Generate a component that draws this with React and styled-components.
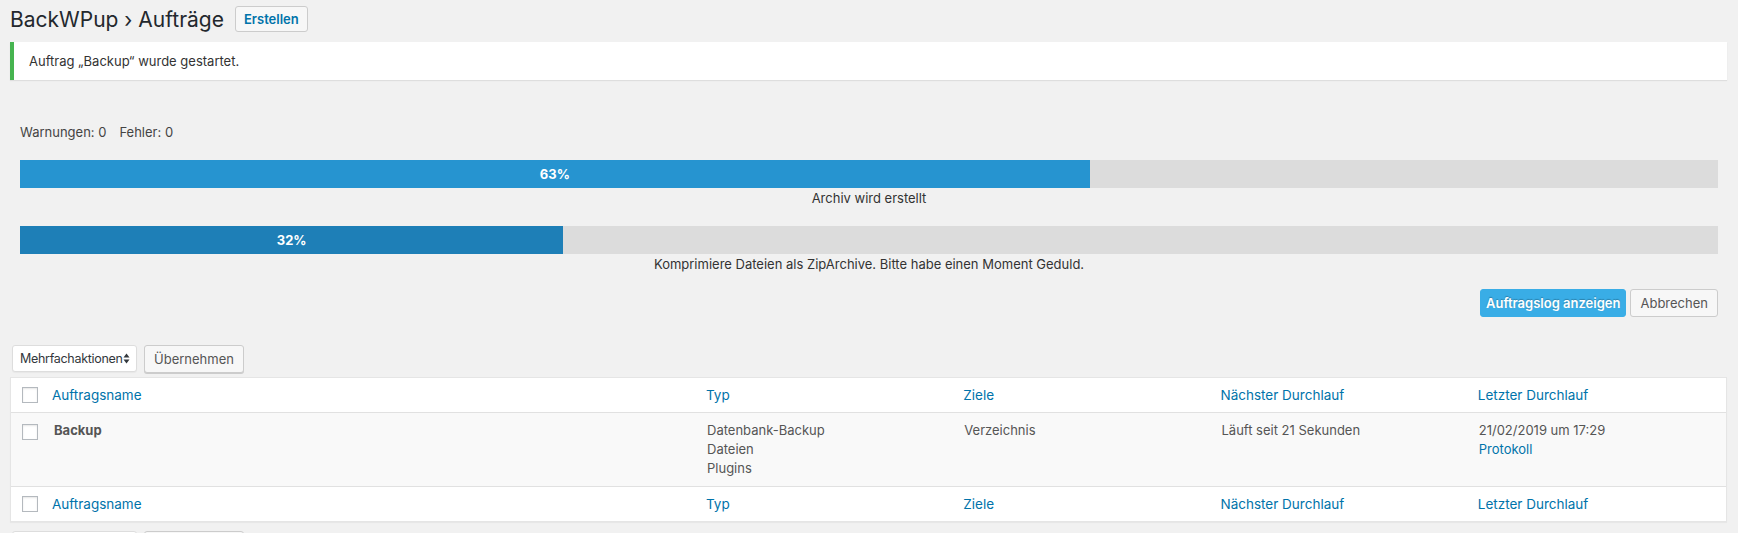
import React from "react";
import styled, { createGlobalStyle } from "styled-components";

const GlobalStyle = createGlobalStyle`
  body {
    margin: 0;
    background: #f1f1f1;
    font-family: Inter, "Liberation Sans", sans-serif;
    font-size: 13px;
    color: #444;
  }
`;

const Wrap = styled.div`
  padding: 0 11px 0 10px;
`;

const TitleRow = styled.div`
  display: flex;
  align-items: center;
  height: 38px;
`;

const Title = styled.h1`
  margin: 0 11px 0 0;
  font-size: 21px;
  font-weight: 400;
  line-height: 29px;
  color: #23282d;
`;

const Button = styled.button`
  box-sizing: border-box;
  height: ${(p) => (p.$small ? "26px" : "28px")};
  padding: 0 ${(p) => (p.$small ? "8px" : p.$primary ? "5px" : "9px")};
  font-family: inherit;
  font-size: 13px;
  font-weight: ${(p) => (p.$primary || p.$link ? 600 : 400)};
  border-radius: 3px;
  border: 1px solid ${(p) => (p.$primary ? "#39ade6" : "#ccc")};
  background: ${(p) => (p.$primary ? "#39ade6" : "#f7f7f7")};
  color: ${(p) => (p.$primary ? "#fff" : p.$link ? "#0073aa" : "#555")};
  text-shadow: ${(p) => (p.$primary ? "0 -1px 1px rgba(0,0,0,0.25)" : "none")};
  box-shadow: ${(p) => (p.$raised ? "0 1px 0 #ccc" : "none")};
  cursor: pointer;
`;

const Notice = styled.div`
  margin-top: 4px;
  height: 38px;
  display: flex;
  align-items: center;
  background: #fff;
  border-left: 4px solid #46b450;
  box-shadow: 0 1px 1px rgba(0, 0, 0, 0.08);
  padding-left: 15px;
  color: #333;
`;

const Progress = styled.section`
  padding: 0 9px 0 10px;
`;

const Counters = styled.div`
  margin-top: 42px;
  display: flex;
  gap: 13px;
  line-height: 20px;
  color: #444;
`;

const Track = styled.div`
  margin-top: 18px;
  height: 28px;
  background: #dcdcdc;
  display: flex;
`;

const Fill = styled.div`
  background: ${(p) => p.$color};
  color: #fff;
  font-weight: 700;
  text-align: center;
  line-height: 28px;
`;

const StepText = styled.div`
  text-align: center;
  line-height: 20px;
  color: #333;
`;

const Actions = styled.div`
  margin-top: 15px;
  display: flex;
  justify-content: flex-end;
  gap: 4px;
`;

const TableNav = styled.div`
  margin-top: ${(p) => p.$top};
  display: flex;
  gap: 7px;
  align-items: flex-start;
  padding-left: 2px;
`;

const Select = styled.div`
  box-sizing: border-box;
  width: 125px;
  height: 27px;
  background: #fff;
  border: 1px solid #ddd;
  border-radius: 3px;
  box-shadow: 0 1px 1px rgba(0, 0, 0, 0.04);
  display: flex;
  align-items: center;
  justify-content: space-between;
  padding: 0 6px 0 7px;
  color: #32373c;
  font-size: 12.5px;
  letter-spacing: -0.3px;
  white-space: nowrap;
`;

const Table = styled.table`
  margin-top: 4px;
  width: 100%;
  table-layout: fixed;
  border-collapse: separate;
  border-spacing: 0;
  background: #fff;
  border: 1px solid #e5e5e5;
  box-shadow: 0 1px 1px rgba(0, 0, 0, 0.04);
`;

const HeadCell = styled.th`
  text-align: left;
  font-weight: 400;
  font-size: 13.5px;
  padding: ${(p) => (p.$check ? "9px 0 0 11px" : "8px 8px 8px 9px")};
  line-height: 18px;
  vertical-align: top;
  color: #0073aa;
  border-bottom: ${(p) => (p.$foot ? "none" : "1px solid #e1e1e1")};
  border-top: ${(p) => (p.$foot ? "1px solid #e1e1e1" : "none")};
`;

const Cell = styled.td`
  background: #f9f9f9;
  vertical-align: top;
  padding: ${(p) => (p.$check ? "11px 0 0 11px" : "8px 8px 8px " + (p.$name ? "11px" : "10px"))};
  line-height: 19px;
  color: #555;
  font-weight: ${(p) => (p.$name ? 700 : 400)};
`;

const Line = styled.div`
  color: ${(p) => (p.$link ? "#0073aa" : "inherit")};
`;

const Check = styled.span`
  display: block;
  box-sizing: border-box;
  width: 16px;
  height: 16px;
  border: 1px solid #b4b9be;
  background: #fff;
  box-shadow: inset 0 1px 2px rgba(0, 0, 0, 0.1);
`;

function SortArrows() {
  return (
    <svg width="7" height="11" viewBox="0 0 7 11">
      <path d="M3.5 0.5 L6.5 4.5 H0.5 Z M3.5 10.5 L6.5 6.5 H0.5 Z" fill="#32373c" />
    </svg>
  );
}

const columns = ["Typ", "Ziele", "Nächster Durchlauf", "Letzter Durchlauf"];

function HeaderRow({ foot }) {
  return (
    <tr>
      <HeadCell $check $foot={foot}>
        <Check />
      </HeadCell>
      <HeadCell $foot={foot}>Auftragsname</HeadCell>
      {columns.map((c) => (
        <HeadCell key={c} $foot={foot}>
          {c}
        </HeadCell>
      ))}
    </tr>
  );
}

function BulkActions({ top }) {
  return (
    <TableNav $top={top}>
      <Select>
        Mehrfachaktionen
        <SortArrows />
      </Select>
      <Button $raised>Übernehmen</Button>
    </TableNav>
  );
}

export default function App() {
  return (
    <Wrap>
      <GlobalStyle />
      <TitleRow>
        <Title>BackWPup › Aufträge</Title>
        <Button $small $link>
          Erstellen
        </Button>
      </TitleRow>
      <Notice>Auftrag „Backup“ wurde gestartet.</Notice>

      <Progress>
        <Counters>
          <span>Warnungen: 0</span>
          <span>Fehler: 0</span>
        </Counters>
        <Track>
          <Fill $color="#2694d0" style={{ width: "63%" }}>
            63%
          </Fill>
        </Track>
        <StepText>Archiv wird erstellt</StepText>
        <Track>
          <Fill $color="#1e7fb7" style={{ width: "32%" }}>
            32%
          </Fill>
        </Track>
        <StepText>Komprimiere Dateien als ZipArchive. Bitte habe einen Moment Geduld.</StepText>
        <Actions>
          <Button $primary>Auftragslog anzeigen</Button>
          <Button>Abbrechen</Button>
        </Actions>
      </Progress>

      <BulkActions top="28px" />
      <Table>
        <colgroup>
          <col style={{ width: "32px" }} />
          <col />
          <col style={{ width: "15%" }} />
          <col style={{ width: "15%" }} />
          <col style={{ width: "15%" }} />
          <col style={{ width: "15%" }} />
        </colgroup>
        <thead>
          <HeaderRow />
        </thead>
        <tbody>
          <tr>
            <Cell $check>
              <Check />
            </Cell>
            <Cell $name>Backup</Cell>
            <Cell>
              <Line>Datenbank-Backup</Line>
              <Line>Dateien</Line>
              <Line>Plugins</Line>
            </Cell>
            <Cell>Verzeichnis</Cell>
            <Cell>Läuft seit 21 Sekunden</Cell>
            <Cell>
              <Line>21/02/2019 um 17:29</Line>
              <Line $link>Protokoll</Line>
            </Cell>
          </tr>
        </tbody>
        <tfoot>
          <HeaderRow foot />
        </tfoot>
      </Table>
      <BulkActions top="9px" />
    </Wrap>
  );
}
